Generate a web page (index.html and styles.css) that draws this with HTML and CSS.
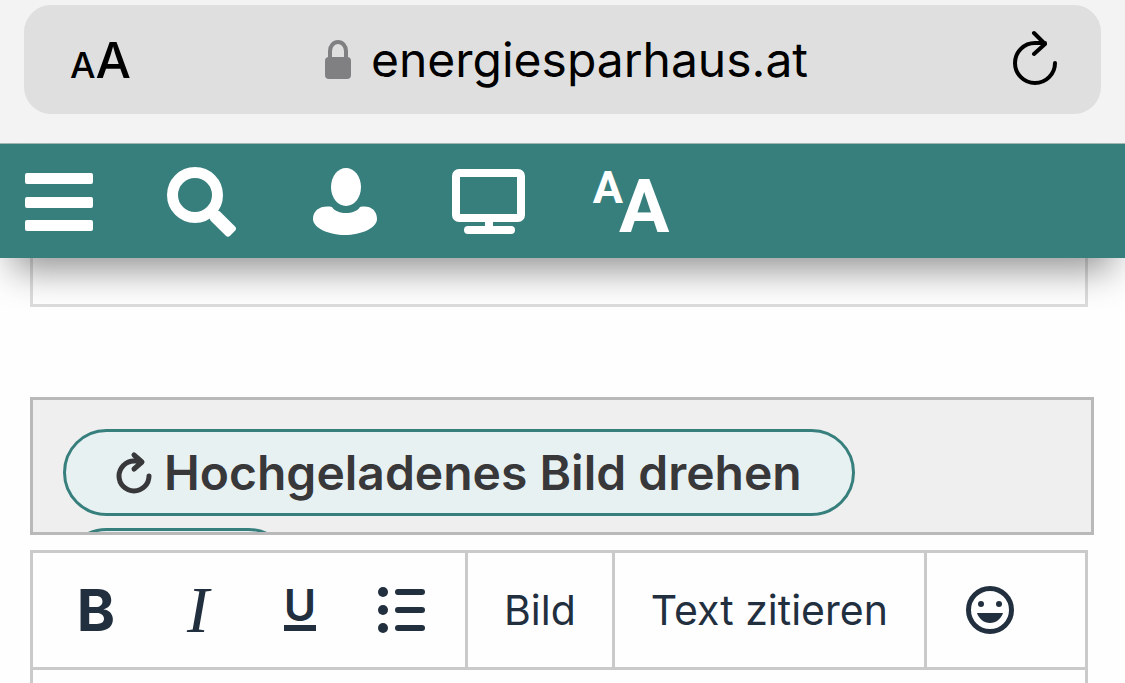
FILE: index.html
```html
<!DOCTYPE html>
<html lang="de">
<head>
<meta charset="utf-8">
<meta name="viewport" content="width=device-width, initial-scale=1">
<title>energiesparhaus.at</title>
<link rel="stylesheet" href="styles.css">
</head>
<body>
<div class="browser-bar">
    <div class="address">
        <button class="text-size" type="button" aria-label="Textgröße"><span class="small">A</span><span>A</span></button>
        <div class="url">
            <svg width="26" height="40" viewBox="0 0 26 40" aria-hidden="true">
                <path d="M5 18V11a8 9 0 0 1 16 0v7" fill="none" stroke="#808083" stroke-width="4"/>
                <rect x="0" y="17" width="26" height="22" rx="4" fill="#808083"/>
            </svg>
            <span>energiesparhaus.at</span>
        </div>
        <button class="reload" type="button" aria-label="Neu laden">
            <svg width="46" height="56" viewBox="0 0 46 56" fill="none" stroke="#000" stroke-width="4" stroke-linecap="round" stroke-linejoin="round">
                <path d="M43 31A20 20 0 1 1 23 11H33M22 1L33 12L22 22"/>
            </svg>
        </button>
    </div>
</div>

<nav class="site-nav">
    <button type="button" aria-label="Menü">
        <svg width="68" height="58" viewBox="0 0 68 58" fill="#fff">
            <rect width="68" height="11" rx="2"/>
            <rect y="24" width="68" height="11" rx="2"/>
            <rect y="47" width="68" height="11" rx="2"/>
        </svg>
    </button>
    <button type="button" aria-label="Suche">
        <svg width="70" height="70" viewBox="0 0 70 70">
            <circle cx="28" cy="28" r="22.5" fill="none" stroke="#fff" stroke-width="11"/>
            <rect x="43" y="50" width="27" height="13" rx="3" fill="#fff" transform="rotate(45 56 56)"/>
        </svg>
    </button>
    <button type="button" aria-label="Profil">
        <svg width="64" height="68" viewBox="0 0 64 68" fill="#fff">
            <ellipse cx="33" cy="19" rx="15" ry="19"/>
            <path d="M19 39C24 47 42 47 47 39C57 37 64 42 64 51C64 60 48 67 32 67S0 60 0 51C0 42 8 37 19 39Z"/>
        </svg>
    </button>
    <button type="button" aria-label="Ansicht">
        <svg width="74" height="66" viewBox="0 0 74 66">
            <rect x="5" y="4" width="65" height="45" rx="3" fill="none" stroke="#fff" stroke-width="8"/>
            <path d="M34 50h8v8h-8z" fill="#fff"/>
            <rect x="13" y="57" width="51" height="8" rx="4" fill="#fff"/>
        </svg>
    </button>
    <button class="font-size" type="button" aria-label="Schriftgröße"><span class="small">A</span><span class="large">A</span></button>
</nav>

<main>
    <textarea class="field" aria-label="Betreff"></textarea>

    <div class="upload">
        <button class="pill" type="button">
            <svg width="36" height="42" viewBox="0 0 36 42" fill="none" stroke="#38383a" stroke-width="5" stroke-linecap="round" stroke-linejoin="round">
                <path d="M33 24A15 15 0 1 1 18 9H25M18 3L26 10L18 17"/>
            </svg>
            <span>Hochgeladenes Bild drehen</span>
        </button>
        <button class="pill pill-short" type="button"></button>
    </div>

    <div class="editor">
        <div class="toolbar">
            <div class="group">
                <button class="bold" type="button">B</button>
                <button class="italic" type="button">I</button>
                <button class="underline" type="button"><span>U</span></button>
                <button type="button" aria-label="Liste">
                    <svg width="48" height="46" viewBox="0 0 48 46" fill="#222f3e">
                        <circle cx="5" cy="5" r="5"/>
                        <circle cx="5" cy="23" r="5"/>
                        <circle cx="5" cy="41" r="5"/>
                        <rect x="17" y="2" width="30" height="6" rx="3"/>
                        <rect x="17" y="20" width="30" height="6" rx="3"/>
                        <rect x="17" y="38" width="30" height="6" rx="3"/>
                    </svg>
                </button>
            </div>
            <div class="group"><button class="label" type="button">Bild</button></div>
            <div class="group"><button class="label" type="button">Text zitieren</button></div>
            <div class="group last">
                <button type="button" aria-label="Smiley">
                    <svg width="48" height="48" viewBox="0 0 48 48" fill="#222f3e">
                        <circle cx="24" cy="24" r="21.5" fill="none" stroke="#222f3e" stroke-width="5"/>
                        <circle cx="15" cy="18" r="3"/>
                        <circle cx="33" cy="18" r="3"/>
                        <path d="M11 27H37C35 33 30 37 24 37S13 33 11 27Z"/>
                    </svg>
                </button>
            </div>
        </div>
        <textarea class="message" aria-label="Nachricht"></textarea>
    </div>
</main>
</body>
</html>
```
FILE: styles.css
```css
* {
    box-sizing: border-box;
}
body {
    margin: 0;
    height: 100vh;
    overflow: hidden;
    display: flex;
    flex-direction: column;
    background: #fefefe;
    font-family: Inter, "Liberation Sans", sans-serif;
}
button {
    display: flex;
    align-items: center;
    justify-content: center;
    flex-shrink: 0;
    padding: 0;
    border: 0;
    background: none;
    font-family: inherit;
    cursor: pointer;
}
svg {
    display: block;
    flex-shrink: 0;
    overflow: visible;
}
textarea {
    display: block;
    width: 100%;
    padding: 12px;
    border: 0;
    background: #fefefe;
    resize: none;
    outline: 0;
}

/* browser bar */
.browser-bar {
    flex-shrink: 0;
    padding: 5px 24px 29px;
    background: #f3f3f3;
    border-bottom: 1px solid #a5b5b4;
}
.address {
    display: flex;
    align-items: center;
    justify-content: space-between;
    height: 109px;
    padding: 0 43px 0 46px;
    border-radius: 27px;
    background: #dfdfdf;
}
.text-size {
    align-items: baseline;
    font-size: 50px;
    font-weight: 500;
    color: #000;
}
.text-size .small {
    font-size: 36px;
}
.url {
    display: flex;
    align-items: center;
    gap: 20px;
    font-size: 48px;
    color: #000;
}
.reload {
    justify-content: flex-end;
    width: 56px;
}

/* green navigation */
.site-nav {
    position: relative;
    z-index: 1;
    flex-shrink: 0;
    display: flex;
    align-items: center;
    gap: 25px;
    height: 114px;
    padding-top: 2px;
    background: #377f7d;
    box-shadow: 0 24px 36px -12px rgba(0, 0, 0, 0.42);
}
.site-nav button {
    width: 118px;
}
.site-nav .font-size {
    align-items: flex-start;
    padding-top: 8px;
    font-family: Roboto, "Liberation Sans", sans-serif;
    font-weight: bold;
    color: #fff;
}
.font-size .small {
    margin-right: -4px;
    font-size: 45px;
    line-height: 48px;
}
.font-size .large {
    font-size: 75px;
    line-height: 84px;
}

main {
    flex: 1;
    min-height: 0;
    display: flex;
    flex-direction: column;
    padding: 0 31px 0 30px;
}
.field {
    flex-shrink: 0;
    width: auto;
    height: 49px;
    margin-right: 6px;
    border: 3px solid #dcdcdc;
    border-top: 0;
}

/* image buttons */
.upload {
    flex-shrink: 0;
    display: flex;
    flex-direction: column;
    align-items: flex-start;
    gap: 12px;
    height: 138px;
    margin: 90px 0 15px;
    padding: 29px 30px 0;
    overflow: hidden;
    border: 3px solid #b9b9b9;
    background: #efefef;
}
.pill {
    gap: 12px;
    height: 87px;
    padding: 0 50px;
    border: 3px solid #377f7d;
    border-radius: 44px;
    background: #e8f1f2;
    font-size: 48px;
    font-weight: 600;
    color: #38383a;
}
.pill-short {
    width: 229px;
}

/* editor */
.editor {
    flex: 1;
    min-height: 0;
    display: flex;
    flex-direction: column;
    margin-right: 6px;
    border: 3px solid #cacaca;
    border-bottom: 0;
}
.toolbar {
    flex-shrink: 0;
    display: flex;
    height: 117px;
    border-bottom: 3px solid #cacaca;
}
.group {
    display: flex;
    align-items: center;
    padding: 0 12px;
    border-right: 3px solid #cacaca;
}
.group.last {
    flex: 1;
    border-right: 0;
}
.group button {
    width: 102px;
    height: 102px;
    color: #222f3e;
}
.group .label {
    width: auto;
    padding: 0 24px;
    font-size: 41px;
}
.group .bold {
    font-size: 58px;
    font-weight: 700;
}
.group .italic {
    font-family: "Liberation Serif", serif;
    font-size: 66px;
    font-style: italic;
}
.underline span {
    padding-bottom: 4px;
    border-bottom: 6px solid #222f3e;
    font-size: 44px;
    font-weight: 600;
    line-height: 32px;
}
.message {
    flex: 1;
    min-height: 0;
}
```
